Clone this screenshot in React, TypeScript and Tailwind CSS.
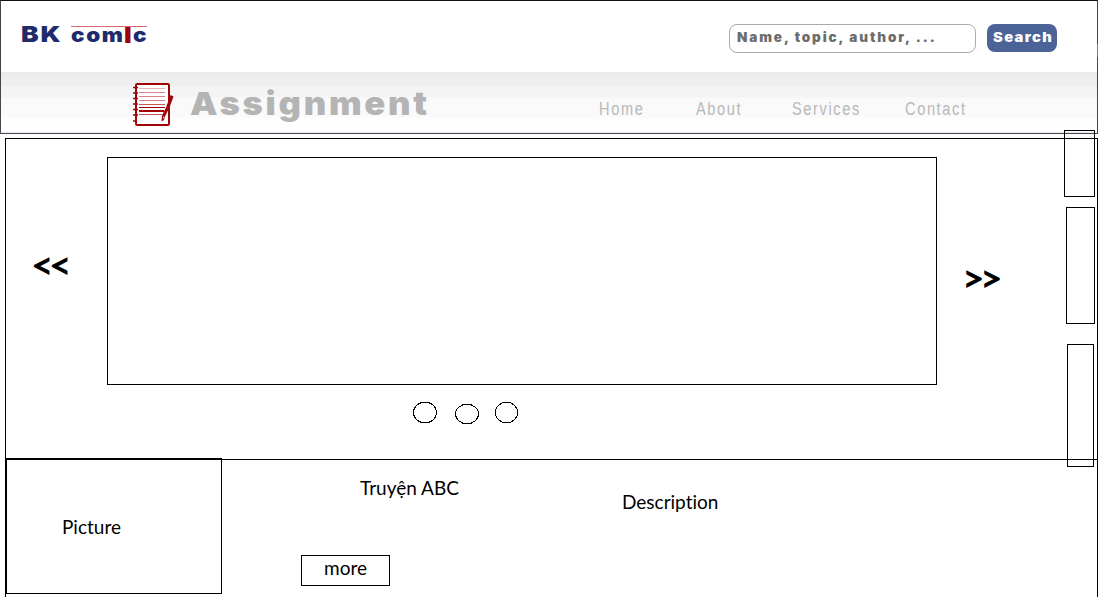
import type { ReactNode } from 'react';

const BLACK_FONT = "font-['Inter',sans-serif] font-black whitespace-nowrap";
const BODY_FONT = "font-['Lato','Noto_Sans',sans-serif] [font-variant-ligatures:none] whitespace-nowrap text-black";

function NotebookIcon() {
  return (
    <svg width="42" height="45" viewBox="0 0 42 45" fill="none" className="shrink-0">
      <rect x="4" y="3" width="33" height="41" rx="1.2" fill="#fff" stroke="#a00408" strokeWidth="2" />
      <path d="M1 6.500h5M1 12h5M1 17.500h5M1 23h5M1 28.500h5M1 34h5M1 40h3" stroke="#a00408" strokeWidth="1.5" />
      <path d="M7 7.500h26" stroke="#e5b5b6" />
      <path d="M7 11.500h26M7 15.500h26M7 19.500h26" stroke="#d98587" />
      <path d="M7 23.500h26M7 33.500h23" stroke="#cb5658" />
      <path d="M7 26.500h26" stroke="#a00408" />
      <path d="M7 30h25" stroke="#a00408" strokeWidth="2" />
      <path d="M38.500 14l3 1.500-4 11-4.500 9-1 3.500-2.500 1.500.5-6 4-8z" fill="#a00408" />
      <path d="M31 35.500l1.500.5-1 2z" fill="#fff" />
    </svg>
  );
}

function NavLink({ children, width }: { children: ReactNode; width: string }) {
  return (
    <a className={`${width} block`}>
      <span className="inline-block origin-left scale-x-[.81] font-['Liberation_Sans',sans-serif] text-[18px] leading-5 tracking-[2px] whitespace-nowrap text-[#b8b8b8]">
        {children}
      </span>
    </a>
  );
}

function Header() {
  return (
    <header className="h-[134px] w-[1098px] border border-[#44464d] border-t-[#111] bg-white">
      <div className="flex h-[71px] items-start">
        <div className="flex w-[728px] pt-[22px] pl-5">
          <div className={`${BLACK_FONT} w-[50px] origin-left scale-x-[1.2] text-[22px] leading-[22px] tracking-[1.5px] text-[#202b6c]`}>BK</div>
          <div className="mt-[3px] h-4 w-[76px] border-t border-[#d66b6b]">
            <div className={`${BLACK_FONT} flex text-[20px] leading-[16px] tracking-[1.5px] text-[#202b6c]`}>
              <span className="w-[54px] origin-left scale-x-[1.12]">com</span>
              <span className="w-[10px] origin-left scale-x-[1.2] text-[22px] text-[#a00408]">I</span>
              <span className="origin-left scale-x-[1.12]">c</span>
            </div>
          </div>
        </div>
        <div className={`${BLACK_FONT} mt-[23px] h-[29px] w-[247px] rounded-[8px] border border-[#aaa] pt-[3px] pl-[7px] text-[13px] leading-[18px] tracking-[1.8px] text-[#6c6c6c]`}>
          <span className="inline-block origin-left scale-x-[1.04]">Name, topic, author, ...</span>
        </div>
        <button className={`${BLACK_FONT} mt-[23px] ml-[11px] h-7 w-[70px] rounded-[8px] bg-[#4c6398] pb-[2px] pl-[6px] text-left text-[13px] leading-[18px] tracking-[1.2px] text-white`}>
          <span className="inline-block origin-left scale-x-[1.13]">Search</span>
        </button>
        <span className="mt-[43px] ml-auto -mr-px h-[13px] w-px bg-[#4f83dc]" />
      </div>
      <div className="flex h-[61px] bg-[linear-gradient(to_bottom,#e9e9e9_0,#eeeeee_5px,#eeeeee_13px,#f3f3f3_14px,#f4f4f4_25px,#f9f9f9_26px,#fafafa_45px,#fefefe_46px,#ffffff_59px,#e2e5ed_61px)] pl-[131px]">
        <div className="pt-[9px]"><NotebookIcon /></div>
        <h1 className={`${BLACK_FONT} ml-[16px] w-[409px] pt-[12px] text-[32px] leading-10 tracking-[2.500px] text-[#b4b4b4]`}>
          <span className="inline-block origin-left scale-x-[1.082]">Assignment</span>
        </h1>
        <nav className="flex pt-[25px]">
          <NavLink width="w-[97px]">Home</NavLink>
          <NavLink width="w-[96px]">About</NavLink>
          <NavLink width="w-[113px]">Services</NavLink>
          <NavLink width="w-[70px]">Contact</NavLink>
        </nav>
      </div>
    </header>
  );
}

function Carousel() {
  return (
    <section className="h-[321px] border-b border-black">
      <div className="flex h-[246px] pt-[18px]">
        <div className={`${BODY_FONT} w-[101px] pt-[87px] pl-[25px] text-[39px] leading-10 font-bold tracking-[-4.500px]`}>{'<<'}</div>
        <div className="h-[228px] w-[830px] border border-black" />
        <div className={`${BODY_FONT} pt-[100px] pl-[25px] text-[39px] leading-10 font-bold tracking-[-4.500px]`}>{'>>'}</div>
      </div>
      <svg width="110" height="24" viewBox="0 0 110 24" fill="none" stroke="#000" shapeRendering="crispEdges" className="mt-[17px] ml-[405px]">
        <ellipse cx="14" cy="10.500" rx="11.500" ry="10.300" />
        <ellipse cx="56" cy="12" rx="11.500" ry="9.800" />
        <ellipse cx="95.500" cy="10.500" rx="11.200" ry="10.300" />
      </svg>
    </section>
  );
}

function ComicRow() {
  return (
    <section className="flex h-[138px]">
      <div className={`${BODY_FONT} -mt-[2px] h-[136px] w-[216px] border border-black pt-[56px] pl-[55px] text-[19px] leading-6`}>Picture</div>
      <div className="ml-[79px] w-[321px]">
        <div className={`${BODY_FONT} mt-[16px] ml-[59px] text-[19px] leading-6`}>Truyện ABC</div>
        <button className={`${BODY_FONT} mt-[55px] block h-[31px] w-[89px] border border-black pb-[5px] text-center text-[19px] leading-6`}>more</button>
      </div>
      <div className={`${BODY_FONT} mt-[30px] text-[19px] leading-6`}>Description</div>
    </section>
  );
}

export default function App() {
  return (
    <div className="relative h-[597px] w-[1099px] overflow-hidden bg-white">
      <Header />
      <main className="mt-[4px] ml-[5px] h-[460px] w-[1093px] border border-b-0 border-black">
        <Carousel />
        <ComicRow />
      </main>
      <div className="absolute top-[130px] left-[1064px] h-[67px] w-[31px] border border-black" />
      <div className="absolute top-[207px] left-[1066px] h-[117px] w-[29px] border border-black" />
      <div className="absolute top-[344px] left-[1067px] h-[123px] w-[27px] border border-black" />
    </div>
  );
}
